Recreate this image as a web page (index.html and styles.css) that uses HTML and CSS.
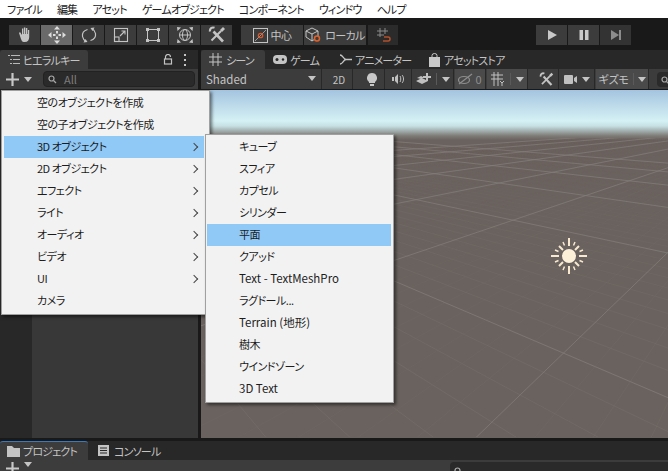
FILE: index.html
```html
<!DOCTYPE html>
<html lang="ja">
<head>
    <meta charset="UTF-8">
    <title>Unity</title>
    <link rel="stylesheet" href="styles.css">
</head>
<body>
    <nav class="menubar">
        <span>ファイル</span><span>編集</span><span>アセット</span><span>ゲームオブジェクト</span><span>コンポーネント</span><span>ウィンドウ</span><span>ヘルプ</span>
    </nav>

    <div class="toolbar">
        <div class="btn-group">
            <button class="tool"><svg width="18" height="18" viewBox="0 0 18 18"><path fill="#c4c4c4" d="M3 7l1-1 2 3V2.500h1.300V8h.6V1.500h1.400V8h.6V2h1.400v6h.6V4h1.300v7c0 3-1.500 5-4.500 5S6 15 5 13z"/></svg></button>
            <button class="tool active"><svg width="20" height="20" viewBox="0 0 20 20"><g fill="#dcdcdc"><path d="M10 1l3 3.500H7zM10 19l-3-3.500h6zM1 10l3.500-3v6zM19 10l-3.500 3V7z"/><rect x="9" y="6" width="2" height="2.500"/><rect x="9" y="11.500" width="2" height="2.500"/><rect x="6" y="9" width="2.500" height="2"/><rect x="11.500" y="9" width="2.500" height="2"/></g></svg></button>
            <button class="tool"><svg width="18" height="18" viewBox="0 0 18 18" fill="none" stroke="#c4c4c4" stroke-width="1.200"><path d="M7.500 3.500C4 4.500 2 7 2.500 10.500 3 13 4.500 14.500 6 15.500"/><path d="M10.500 14.500c3.500-1 5.500-3.500 5-7C15 5 13.500 3.500 12 2.500"/><path fill="#c4c4c4" stroke="none" d="M3.500 16.500l4-.5-2-3zM14.500 1.500l-4 .5 2 3z"/></svg></button>
            <button class="tool"><svg width="16" height="16" viewBox="0 0 16 16" fill="none" stroke="#c4c4c4" stroke-width="1.100"><rect x="1.500" y="1.500" width="13" height="13"/><rect x="1.500" y="10" width="4.500" height="4.500"/><path d="M7 9l5-5M8.500 4H12v3.500"/></svg></button>
            <button class="tool"><svg width="16" height="16" viewBox="0 0 16 16"><rect x="2.500" y="2.500" width="11" height="11" fill="none" stroke="#c4c4c4"/><g fill="#c4c4c4"><rect x="1" y="1" width="3" height="3"/><rect x="12" y="1" width="3" height="3"/><rect x="1" y="12" width="3" height="3"/><rect x="12" y="12" width="3" height="3"/></g></svg></button>
            <button class="tool"><svg width="18" height="18" viewBox="0 0 18 18" fill="none" stroke="#c4c4c4"><circle cx="9" cy="9" r="5.500"/><ellipse cx="9" cy="9" rx="2.500" ry="5.500"/><path d="M3.500 9h11"/><path fill="#c4c4c4" stroke="none" d="M1 1l4 .5L1.500 5zM17 1l-.5 4L13 1.500zM1 17l.5-4L5 16.500zM17 17l-4-.5 3.500-3.500z"/></svg></button>
            <button class="tool"><svg width="18" height="18" viewBox="0 0 18 18"><g stroke="#c4c4c4" fill="none"><path stroke-width="2.600" d="M5.500 5.500L15 15.500"/><path stroke-width="2" d="M13 5L3.500 14.500"/><path stroke-width="2.200" d="M6.500 1.800C4 .8 1.500 2.500 2 5.500"/></g><path fill="#c4c4c4" d="M12 4l3-3 2 2-3 3z"/></svg></button>
        </div>
        <div class="btn-group pivot">
            <button class="tool wide"><svg width="15" height="15" viewBox="0 0 15 15" fill="none"><rect x=".5" y=".5" width="14" height="14" stroke="#c4c4c4"/><path d="M2 13L13 2" stroke="#c4c4c4" stroke-width=".7"/><circle cx="7.500" cy="7.500" r="2.200" stroke="#d9582b" stroke-width="1.300"/></svg><span>中心</span></button>
            <button class="tool wide"><svg width="17" height="16" viewBox="0 0 17 16" fill="none" stroke="#c4c4c4"><path d="M1 4l6-3 6 3v6l-6 4-6-4zM1 4l6 3 6-3M7 7v7"/><circle cx="12" cy="11.500" r="2.500" stroke="#e0622b" stroke-width="1.500" fill="#3c3c3c"/></svg><span>ローカル</span></button>
        </div>
        <button class="tool snap"><svg width="15" height="16" viewBox="0 0 15 16" fill="none" stroke="#8a8a8a"><path d="M4 1v9M9 1v6M1 4h11M1 8h7"/><path d="M8 10h4a2 2 0 0 1 0 4H7" stroke="#b4502a" stroke-width="1.500"/></svg></button>
        <div class="btn-group play">
            <button class="tool"><svg width="12" height="12" viewBox="0 0 12 12"><path fill="#c8c8c8" d="M2 1l9 5-9 5z"/></svg></button>
            <button class="tool"><svg width="12" height="12" viewBox="0 0 12 12" fill="#c8c8c8"><rect x="1.500" y="1" width="3.500" height="10"/><rect x="7" y="1" width="3.500" height="10"/></svg></button>
            <button class="tool dim"><svg width="12" height="12" viewBox="0 0 12 12" fill="#8c8c8c"><path d="M1 1l8 5-8 5z"/><rect x="9" y="1" width="2" height="10"/></svg></button>
        </div>
    </div>

    <div class="workspace">
        <section class="hierarchy">
            <div class="tabs">
                <div class="tab current hier-tab">
                    <svg width="12" height="10" viewBox="0 0 12 10" fill="#b8b8b8"><rect x="0" y="0" width="2" height="1"/><rect x="3" y="0" width="9" height="1"/><rect x="2" y="4" width="2" height="1"/><rect x="5" y="4" width="7" height="1"/><rect x="2" y="8" width="2" height="1"/><rect x="5" y="8" width="7" height="1"/></svg>
                    <span>ヒエラルキー</span>
                </div>
                <div class="tab-tools">
                    <svg width="10" height="11" viewBox="0 0 10 11" fill="none" stroke="#c4c4c4" stroke-width="1.200"><rect x="1.500" y="5" width="7" height="5"/><path d="M2.500 5V3a2.500 2.500 0 0 1 5 0"/></svg>
                    <svg width="4" height="12" viewBox="0 0 4 12" fill="#c4c4c4"><rect x="1" y="0" width="2" height="2"/><rect x="1" y="5" width="2" height="2"/><rect x="1" y="10" width="2" height="2"/></svg>
                </div>
            </div>
            <div class="hier-bar">
                <button class="add-btn"><svg width="13" height="13" viewBox="0 0 12 12"><path fill="#c8c8c8" d="M5 0h2v5h5v2H7v5H5V7H0V5h5z"/></svg><i class="caret"></i></button>
                <div class="search">
                    <svg width="11" height="9" viewBox="0 0 11 9" fill="none" stroke="#a8a8a8" stroke-width="1.200"><circle cx="3.500" cy="3.500" r="2.500"/><path d="M5.500 5.500L8 8"/></svg>
                    <span>All</span>
                </div>
            </div>
            <div class="hier-body">
                <div class="hier-gutter"></div>
            </div>
        </section>

        <section class="scene-panel">
            <div class="tabs">
                <div class="tab current scene-tab">
                    <svg width="13" height="13" viewBox="0 0 13 13" stroke="#c4c4c4" fill="none"><path d="M4 0v13M9 0v13M0 4h13M0 9h13"/></svg>
                    <span>シーン</span>
                </div>
                <div class="tab game-tab">
                    <svg width="14" height="9" viewBox="0 0 14 9"><rect width="14" height="9" rx="4" fill="#c4c4c4"/><circle cx="4" cy="4.500" r="1.500" fill="#282828"/><circle cx="10" cy="4.500" r="1.200" fill="#282828"/></svg>
                    <span>ゲーム</span>
                </div>
                <div class="tab anim-tab">
                    <svg width="12" height="11" viewBox="0 0 12 11" fill="none" stroke="#c4c4c4" stroke-width="1.300"><path d="M0 1c3 0 3 4 6 4.500h6M0 10c3 0 3-4 6-4.500"/></svg>
                    <span>アニメーター</span>
                </div>
                <div class="tab store-tab">
                    <svg width="11" height="14" viewBox="0 0 11 14"><path fill="#c8c8c8" d="M0 4h11v10H0z"/><path fill="none" stroke="#c8c8c8" d="M3 4V2.500a2.500 2 0 0 1 5 0V4"/></svg>
                    <span>アセットストア</span>
                </div>
            </div>
            <div class="scene-bar">
                <div class="sb shaded"><span>Shaded</span><i class="caret"></i></div>
                <div class="sb btn2d">2D</div>
                <div class="sb ico light"><svg width="10" height="13" viewBox="0 0 10 13" fill="#c8c8c8"><path d="M5 0a5 5 0 0 1 3 9v1H2V9A5 5 0 0 1 5 0zM3 11h4v2H3z"/></svg></div>
                <div class="sb ico"><svg width="14" height="10" viewBox="0 0 14 10" fill="#c0c0c0"><path d="M0 3h2v4H0zM3 3l3-3v10L3 7z"/><path d="M8 2c1 1 1 5 0 6M10 1c2 2 2 6 0 8" fill="none" stroke="#c0c0c0"/></svg></div>
                <div class="sb ico split"><svg width="15" height="12" viewBox="0 0 15 12" fill="#c0c0c0"><path d="M0 8l6-3 6 3-6 3zM1 5l4-2 3 1.500-3 1.500z"/><path d="M10 0h2v3h3v2h-3v3h-2V5H7V3h3z"/></svg><b></b><i class="caret"></i></div>
                <div class="sb ico vis"><svg width="15" height="12" viewBox="0 0 15 12" fill="none" stroke="#8e8e8e" stroke-width="1.200"><ellipse cx="6" cy="7" rx="5.500" ry="3.500"/><path d="M1 11L14 1"/></svg><span>0</span></div>
                <div class="sb ico split grid-btn"><svg width="14" height="14" viewBox="0 0 14 14" fill="none" stroke="#c0c0c0"><path d="M3 0v14M7 0v14M0 3h12M0 7h12M9 9l2 2 2-2M11 11v3"/></svg><b></b><i class="caret"></i></div>
                <div class="sb ico tools"><svg width="15" height="15" viewBox="0 0 18 18"><g stroke="#c4c4c4" fill="none"><path stroke-width="2.600" d="M5.500 5.500L15 15.500"/><path stroke-width="2" d="M13 5L3.500 14.500"/><path stroke-width="2.200" d="M6.500 1.800C4 .8 1.500 2.500 2 5.500"/></g><path fill="#c4c4c4" d="M12 4l3-3 2 2-3 3z"/></svg></div>
                <div class="sb ico cam"><svg width="13" height="9" viewBox="0 0 13 9" fill="#c0c0c0"><rect width="9" height="9" rx="1"/><path d="M10 3l3-2v7l-3-2z"/></svg><i class="caret"></i></div>
                <div class="sb ico split gizmo"><span>ギズモ</span><b></b><i class="caret"></i></div>
                <div class="scene-search"><svg width="11" height="9" viewBox="0 0 11 9" fill="none" stroke="#a8a8a8" stroke-width="1.200"><circle cx="3.500" cy="3.500" r="2.500"/><path d="M5.500 5.500L8 8"/></svg></div>
            </div>
            <div class="viewport">
                <svg id="grid" class="grid" width="467" height="299" viewBox="0 48 467 299"></svg>
                <svg class="sun" width="36" height="36" viewBox="0 0 36 36">
                    <g stroke="#f7e8cf" stroke-width="2">
                        <path d="M18 0v8M18 28v8M0 18h8M28 18h8M8 8l4 4M24 24l4 4M28 8l-4 4M12 24l-4 4"/>
                    </g>
                    <g stroke="#f7e8cf" stroke-width="1.500">
                        <path d="M12 4l1.500 3.500M24 4l-1.500 3.500M12 32l1.500-3.500M24 32l-1.500-3.500M4 12l3.500 1.500M32 12l-3.500 1.500M4 24l3.500-1.500M32 24l-3.500-1.500"/>
                    </g>
                    <circle cx="18" cy="18" r="7" fill="#fdf0d8"/>
                </svg>
            </div>
        </section>
    </div>

    <section class="bottom">
        <div class="tabs">
            <div class="tab current project-tab">
                <svg width="13" height="11" viewBox="0 0 13 11" fill="#c4c4c4"><path d="M0 0h5l2 2h6v9H0z"/></svg>
                <span>プロジェクト</span>
            </div>
            <div class="tab console-tab">
                <svg width="11" height="11" viewBox="0 0 11 11"><rect width="11" height="11" fill="#c4c4c4"/><path stroke="#282828" d="M2 3h7M2 5.500h7M2 8h7"/></svg>
                <span>コンソール</span>
            </div>
        </div>
        <div class="bottom-bar">
            <button class="add-btn"><svg width="13" height="13" viewBox="0 0 12 12"><path fill="#c8c8c8" d="M5 0h2v5h5v2H7v5H5V7H0V5h5z"/></svg><i class="caret"></i></button>
            <div class="bottom-search"><svg width="8" height="8" viewBox="0 0 8 8" fill="none" stroke="#b0b0b0" stroke-width="1.200"><circle cx="3.500" cy="3.500" r="2.500"/></svg></div>
        </div>
    </section>

    <!-- create menu -->
    <ul class="menu main-menu">
        <li>空のオブジェクトを作成</li>
        <li>空の子オブジェクトを作成</li>
        <li class="hl sub">3D オブジェクト</li>
        <li class="sub">2D オブジェクト</li>
        <li class="sub">エフェクト</li>
        <li class="sub">ライト</li>
        <li class="sub">オーディオ</li>
        <li class="sub">ビデオ</li>
        <li class="sub">UI</li>
        <li>カメラ</li>
    </ul>
    <ul class="menu sub-menu">
        <li>キューブ</li>
        <li>スフィア</li>
        <li>カプセル</li>
        <li>シリンダー</li>
        <li class="hl">平面</li>
        <li>クアッド</li>
        <li class="latin">Text - TextMeshPro</li>
        <li>ラグドール...</li>
        <li class="latin">Terrain (地形)</li>
        <li>樹木</li>
        <li>ウインドゾーン</li>
        <li class="latin">3D Text</li>
    </ul>

    <script src="grid.js"></script>
</body>
</html>
```

FILE: styles.css
```css
* {
    box-sizing: border-box;
}

body {
    margin: 0;
    width: 668px;
    height: 471px;
    overflow: hidden;
    position: relative;
    background: #191919;
    font-family: "Noto Sans CJK JP", "Noto Sans", sans-serif;
    font-size: 11px;
    font-feature-settings: "palt";
    white-space: nowrap;
    color: #c4c4c4;
}

button {
    border: none;
    padding: 0;
    font: inherit;
    color: inherit;
}

.menubar {
    height: 18px;
    background: #fff;
    color: #222;
    display: flex;
    gap: 15px;
    padding-left: 7px;
    font-size: 11px;
    letter-spacing: -0.8px;
    line-height: 18px;
    margin-bottom: 2px;
}

.toolbar {
    height: 30px;
    background: #191919;
    display: flex;
    align-items: center;
    padding-left: 9px;
}

.btn-group {
    display: flex;
    gap: 1px;
}

.tool {
    width: 31px;
    height: 20px;
    background: #3c3c3c;
    display: flex;
    align-items: center;
    justify-content: center;
}

.tool svg {
    flex: none;
}

.tool.active {
    background: #6a6a6a;
}

.tool.wide {
    width: 62px;
    gap: 3px;
    font-size: 11px;
    letter-spacing: -0.6px;
}

.pivot {
    margin-left: 9px;
}

.snap {
    width: 30px;
    margin-left: 2px;
    background: #2b2b2b;
}

.play {
    margin-left: 138px;
}

.tool.dim {
    background: #333;
}

.workspace {
    height: 388px;
    display: flex;
    gap: 3px;
}

.tabs {
    height: 19px;
    background: #282828;
    display: flex;
    align-items: stretch;
}

.tab {
    display: flex;
    align-items: center;
    gap: 4px;
    font-size: 11px;
    letter-spacing: -0.8px;
}

.tab.current {
    background: #3c3c3c;
    border-radius: 3px 3px 0 0;
}

.hierarchy {
    width: 198px;
    display: flex;
    flex-direction: column;
}

.hier-tab {
    width: 88px;
    padding-left: 8px;
    gap: 3px;
}

.tab-tools {
    margin-left: auto;
    display: flex;
    align-items: center;
    gap: 10px;
    padding-right: 11px;
}

.hier-bar {
    height: 21px;
    background: #3c3c3c;
    border-bottom: 1px solid #232323;
    display: flex;
    align-items: center;
}

.add-btn {
    width: 36px;
    height: 20px;
    background: #3c3c3c;
    display: flex;
    align-items: center;
    gap: 5px;
    padding-left: 6px;
}

.caret {
    display: inline-block;
    border-left: 4px solid transparent;
    border-right: 4px solid transparent;
    border-top: 5px solid #c4c4c4;
}

.search {
    margin-left: 7px;
    width: 152px;
    height: 16px;
    background: #2a2a2a;
    border: 1px solid #222;
    border-radius: 4px;
    display: flex;
    align-items: center;
    gap: 5px;
    padding-left: 4px;
    color: #7c7c7c;
    font-size: 11px;
}

.hier-body {
    flex: 1;
    background: #383838;
}

.hier-gutter {
    width: 32px;
    height: 100%;
    background: #282828;
}

.scene-panel {
    flex: 1;
    min-width: 0;
    display: flex;
    flex-direction: column;
}

.scene-tab {
    width: 64px;
    padding-left: 8px;
}

.game-tab {
    width: 67px;
    padding-left: 8px;
    gap: 3px;
}

.anim-tab {
    width: 90px;
    padding-left: 8px;
    gap: 3px;
}

.store-tab {
    padding-left: 7px;
}

.scene-bar {
    height: 21px;
    background: #3c3c3c;
    border-bottom: 1px solid #191919;
    display: flex;
    align-items: stretch;
    gap: 1px;
}

.sb {
    background: #3c3c3c;
    border-right: 1px solid #282828;
    display: flex;
    align-items: center;
    justify-content: center;
    flex: none;
}

.shaded {
    width: 121px;
    justify-content: space-between;
    padding: 0 5px 1px;
    font-size: 11.5px;
}

.btn2d {
    width: 27px;
    margin-left: 3px;
    font-size: 10px;
}

.ico {
    gap: 5px;
    width: 26px;
}

.light {
    margin-left: 5px;
}

.split {
    width: 41px;
}

.split b {
    width: 1px;
    height: 12px;
    background: #5a5a5a;
}

.vis {
    width: 31px;
    gap: 2px;
    background: #4a4a4a;
    color: #8e8e8e;
}

.grid-btn {
    background: #4a4a4a;
}

.tools {
    margin-left: 5px;
    width: 25px;
}

.cam {
    width: 35px;
}

.gizmo {
    width: 53px;
    background: #4a4a4a;
    font-size: 11px;
    letter-spacing: -0.3px;
    gap: 4px;
}

.scene-search {
    margin: 3px 0 0 7px;
    width: 20px;
    height: 15px;
    background: #2a2a2a;
    border-radius: 4px 0 0 4px;
    padding-left: 4px;
}

.viewport {
    flex: 1;
    position: relative;
    overflow: hidden;
    background: linear-gradient(#a4c4df 0, #d5f1f5 31px, #c6e0e3 36px, #7d7a75 46px, #6a625e 50px);
}

.grid {
    position: absolute;
    left: 0;
    top: 48px;
}

.sun {
    position: absolute;
    left: 350px;
    top: 148px;
}

.bottom {
    height: 33px;
    border-top: 3px solid #191919;
    position: relative;
}

.project-tab {
    width: 88px;
    padding-left: 7px;
    gap: 3px;
    border-top: 1px solid #3a79bb;
    border-radius: 0;
}

.console-tab {
    padding-left: 10px;
    gap: 5px;
}

.bottom-bar {
    height: 12px;
    background: #3c3c3c;
    display: flex;
    overflow: hidden;
}

.bottom-bar .add-btn {
    height: 24px;
    align-items: flex-start;
    padding-top: 2px;
}

.bottom-search {
    position: absolute;
    left: 450px;
    top: 21px;
    width: 218px;
    height: 14px;
    background: #2a2a2a;
    border-radius: 4px 0 0 0;
    padding-left: 4px;
}

.menu {
    position: absolute;
    margin: 0;
    list-style: none;
    background: #f2f2f2;
    border: 1px solid #a0a0a0;
    box-shadow: 2px 2px 3px rgba(0, 0, 0, 0.5);
    color: #1c1c1c;
    font-size: 11px;
    letter-spacing: -0.5px;
}

.menu li {
    height: 22px;
    line-height: 20px;
    position: relative;
}

.menu li.hl {
    background: #90c8f6;
}

.menu li.latin {
    font-size: 11.5px;
    letter-spacing: 0;
}

.main-menu {
    left: 1px;
    top: 90px;
    width: 209px;
    padding: 1px 5px 2px 2px;
}

.main-menu li {
    padding-left: 33px;
}

.sub-menu {
    left: 205px;
    top: 134px;
    width: 189px;
    padding: 1px 2px 2px 1px;
}

.sub-menu li {
    padding-left: 32px;
}

.sub::after {
    content: "";
    position: absolute;
    right: 7px;
    top: 8px;
    width: 5px;
    height: 5px;
    border-top: 1px solid #444;
    border-right: 1px solid #444;
    transform: rotate(45deg);
}
```

FILE: grid.js
```js
// Scene grid: two families of lines running to their vanishing points.
// Every 10th line is a major one.
var svg = document.getElementById("grid");
var NS = "http://www.w3.org/2000/svg";

var V1 = { x: -208, y: 20 };
var V2 = { x: 602, y: 32 };

function drawLine(from, through, major, near) {
    var line = document.createElementNS(NS, "line");
    var dx = through.x - from.x;
    var dy = through.y - from.y;
    line.setAttribute("x1", from.x);
    line.setAttribute("y1", from.y);
    line.setAttribute("x2", from.x + dx * 6);
    line.setAttribute("y2", from.y + dy * 6);
    line.setAttribute("stroke", major ? "#837d79" : "#78726e");
    line.setAttribute("stroke-opacity", major ? 0.75 : Math.max(0.04, Math.min(0.5, near)));
    svg.appendChild(line);
}

// Lines running to V1 are spaced along the major line D (from V2)
for (var k = -21; k <= 40; k++) {
    var val = 0.00532 + k * 0.000231;
    var d = 1 / val;
    var p = { x: V2.x - 0.718 * d, y: V2.y + 0.697 * d };
    drawLine(V1, p, k % 10 === 0, 0.22 - k * 0.02);
}

// Lines running to V2 are spaced along the major line B (from V1)
for (var k = -32; k <= 60; k++) {
    var val = 0.00145 + k * 0.000043;
    var d = 1 / val;
    var p = { x: V1.x + 0.978 * d, y: V1.y + 0.207 * d };
    drawLine(V2, p, k % 10 === 0, 0.25 - k * 0.015);
}
```
